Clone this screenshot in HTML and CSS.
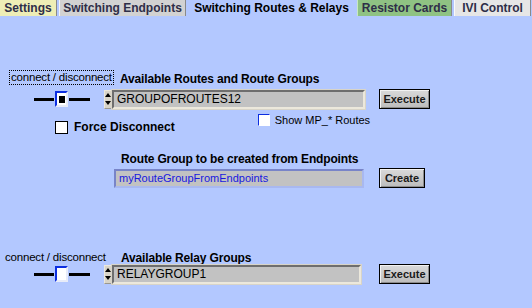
FILE: index.html
```html
<!DOCTYPE html>
<html lang="en">
<head>
  <meta charset="UTF-8">
  <title>Switching Routes &amp; Relays</title>
  <link rel="stylesheet" href="styles.css">
</head>
<body>

  <nav class="tabs">
    <div class="tab tab-settings">Settings</div>
    <div class="tab tab-endpoints">Switching Endpoints</div>
    <div class="tab tab-active">Switching Routes &amp; Relays</div>
    <div class="tab tab-resistor">Resistor Cards</div>
    <div class="tab tab-ivi">IVI Control</div>
  </nav>

  <main class="panel">

    <section class="group group-routes">
      <div class="row row-labels">
        <div class="side"><span class="toggle-label focused">connect / disconnect</span></div>
        <div class="caption">Available Routes and Route Groups</div>
      </div>
      <div class="row row-controls">
        <div class="side">
          <div class="slider"><span class="knob on"></span></div>
        </div>
        <div class="ring">
          <span class="spin"><i class="up"></i><i class="down"></i></span>
          <span class="field">GROUPOFROUTES12</span>
        </div>
        <button class="btn">Execute</button>
      </div>
      <div class="row row-checks">
        <label class="check check-force"><span class="box"></span>Force Disconnect</label>
        <label class="check check-mp"><span class="box"></span>Show MP_* Routes</label>
      </div>
    </section>

    <section class="group group-create">
      <div class="caption">Route Group to be created from Endpoints</div>
      <div class="row row-controls">
        <span class="field field-input">myRouteGroupFromEndpoints</span>
        <button class="btn btn-create">Create</button>
      </div>
    </section>

    <section class="group group-relays">
      <div class="row row-labels">
        <div class="side"><span class="toggle-label">connect / disconnect</span></div>
        <div class="caption">Available Relay Groups</div>
      </div>
      <div class="row row-controls">
        <div class="side">
          <div class="slider"><span class="knob"></span></div>
        </div>
        <div class="ring ring-short">
          <span class="spin"><i class="up"></i><i class="down"></i></span>
          <span class="field">RELAYGROUP1</span>
        </div>
        <button class="btn">Execute</button>
      </div>
    </section>

  </main>

</body>
</html>
```

FILE: styles.css
```css
body {
  margin: 0;
  width: 532px;
  height: 308px;
  background: #b3c8ff;
  font-family: "Liberation Sans", Arial, sans-serif;
  font-size: 11px;
  color: #000;
  overflow: hidden;
}

/* tab strip */
.tabs {
  display: flex;
  gap: 2px;
  height: 16px;
}

.tab {
  height: 16px;
  line-height: 16px;
  font-weight: bold;
  font-size: 12px;
  color: #2e2e48;
  text-align: center;
  box-sizing: border-box;
  border-right: 1px solid #8a8a8a;
  white-space: nowrap;
}

.tab-settings {
  width: 57px;
  background: #eeeeb6;
}

.tab-endpoints {
  width: 127px;
  background: #d2d2d2;
  border-left: 1px solid #f4f4f4;
}

.tab-active {
  width: 167px;
  background: #b3c8ff;
  color: #000;
  border-right: none;
  height: 18px;
}

.tab-resistor {
  width: 95px;
  background: #8fc283;
  border-left: 1px solid #c8e8c0;
}

.tab-ivi {
  width: 77px;
  background: #e6e6e6;
  border-left: 1px solid #fafafa;
}

/* panel */
.panel {
  padding-top: 54px;
}

.row {
  display: flex;
  align-items: center;
}

.side {
  width: 104px;
  flex: none;
  white-space: nowrap;
}

.caption {
  font-weight: bold;
  font-size: 12px;
  line-height: 14px;
  letter-spacing: -0.15px;
  white-space: nowrap;
}

.toggle-label {
  display: inline-block;
  padding: 0 1px;
  font-size: 11.5px;
  line-height: 13px;
  letter-spacing: -0.2px;
  white-space: nowrap;
}

.row-labels {
  height: 15px;
  align-items: flex-start;
}

.group-routes .toggle-label {
  margin-left: 9px;
  border: 1px dotted #000;
}

.group-routes .caption {
  margin-left: 16px;
  margin-top: 2px;
}

.group-relays .row-labels {
  height: 13px;
}

.group-relays .toggle-label {
  margin-left: 4px;
  margin-top: -3px;
}

.group-relays .caption {
  margin-left: 17px;
}

/* slider toggle */
.slider {
  position: relative;
  margin-left: 34px;
  width: 56px;
  height: 3px;
  background: #000;
}

.knob {
  position: absolute;
  left: 21px;
  top: -7px;
  width: 9px;
  height: 12px;
  background: #fff;
  border: 2px solid #0c2ee0;
  border-right-color: #e8ecf8;
  border-bottom-color: #e8ecf8;
  outline: 1px solid #b3c8ff;
}

.knob.on::after {
  content: "";
  position: absolute;
  left: 2px;
  top: 3px;
  width: 6px;
  height: 7px;
  background: #000;
}

/* ring control */
.ring {
  display: flex;
  align-items: stretch;
  height: 19px;
}

.spin {
  width: 8px;
  display: flex;
  flex-direction: column;
  background: #d8d4c8;
  border: 1px solid #ece8dc;
  border-right-color: #9a9890;
  border-bottom-color: #9a9890;
  box-sizing: border-box;
}

.spin i {
  flex: 1;
  position: relative;
}

.spin .up::after,
.spin .down::after {
  content: "";
  position: absolute;
  left: 0;
  border-left: 3px solid transparent;
  border-right: 3px solid transparent;
}

.spin .up::after {
  top: 2px;
  border-bottom: 4px solid #000;
}

.spin .down::after {
  top: 2px;
  border-top: 4px solid #000;
}

.field {
  display: flex;
  align-items: center;
  width: 253px;
  height: 19px;
  box-sizing: border-box;
  padding-left: 3px;
  font-size: 12px;
  background: #c2c2c2;
  border: 2px solid #6e6e6e;
  border-right-color: #ece8dc;
  border-bottom-color: #ece8dc;
  outline: 1px solid #d8d4c8;
  white-space: nowrap;
}

.ring-short .field {
  width: 249px;
}

/* buttons */
.btn {
  font-family: "Liberation Sans", Arial, sans-serif;
  font-weight: bold;
  font-size: 11px;
  color: #1a1a1a;
  width: 51px;
  height: 20px;
  padding: 0;
  background: linear-gradient(#dadada, #bcbcbc);
  border: 1px solid #000;
  box-shadow: inset 1px 1px 0 #f2f2f2, inset -1px -1px 0 #8c8c8c;
  margin-left: 14px;
}

.ring-short + .btn {
  margin-left: 18px;
}

.btn-create {
  width: 46px;
  margin-left: 15px;
}

.group-routes .row-controls {
  margin-top: 4px;
}

/* checkboxes */
.row-checks {
  align-items: flex-start;
  height: 43px;
}

.check {
  display: flex;
  align-items: center;
  white-space: nowrap;
}

.check-force {
  margin-left: 55px;
  margin-top: 11px;
  font-weight: bold;
  font-size: 12px;
}

.check-mp {
  margin-left: 83px;
  margin-top: 5px;
}

.box {
  background: #fff;
  margin-right: 5px;
}

.check-force .box {
  border: 1px solid #000;
  width: 11px;
  height: 11px;
  margin-right: 6px;
}

.check-mp .box {
  border: 1px solid #0c2ee0;
  border-right-color: #fff;
  border-bottom-color: #fff;
  width: 10px;
  height: 10px;
}

/* create group */
.group-create {
  padding-left: 121px;
}

.group-create .row-controls {
  margin-top: 2px;
  margin-left: -7px;
}

.field-input {
  width: 250px;
  height: 19px;
  font-size: 11px;
  color: #1818e0;
  border-color: #7884c8;
  border-right-color: #a8b8f0;
  border-bottom-color: #a8b8f0;
  outline: none;
}

/* relays */
.group-relays {
  margin-top: 63px;
}

.group-relays .row-controls {
  margin-top: 0;
}
```
